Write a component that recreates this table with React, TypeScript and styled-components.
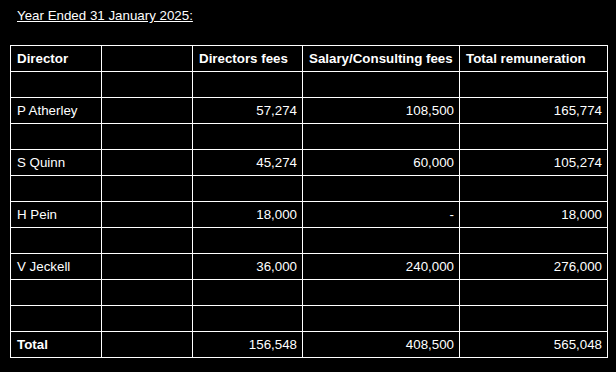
import React from 'react';
import styled, { createGlobalStyle } from 'styled-components';

const GlobalStyle = createGlobalStyle`
  html, body {
    margin: 0;
    padding: 0;
    background: #000;
  }
  body {
    font-family: 'Liberation Sans', Arial, sans-serif;
    color: #fff;
  }
`;

const Page = styled.div`
  width: 616px;
  height: 372px;
  background: #000;
  padding: 8px 0 0 10px;
  box-sizing: border-box;
`;

const Heading = styled.div`
  font-size: 13.333px;
  line-height: 16px;
  padding-left: 7px;
  text-decoration: underline;
  margin-bottom: 21px;
`;

const Table = styled.table`
  border-collapse: collapse;
  table-layout: fixed;
  width: 597px;
`;

const Cell = styled.td<{ $num?: boolean; $head?: boolean }>`
  border: 1px solid #fff;
  height: 26px;
  padding: 0 5px 0 6px;
  box-sizing: border-box;
  font-size: 13.333px;
  font-weight: ${(p) => (p.$head ? 700 : 400)};
  text-align: ${(p) => (p.$num ? 'right' : 'left')};
  white-space: nowrap;
  vertical-align: middle;
`;

type Row = {
  name: string;
  fees: string;
  salary: string;
  total: string;
  bold?: boolean;
};

const rows: (Row | null)[] = [
  null,
  { name: 'P Atherley', fees: '57,274', salary: '108,500', total: '165,774' },
  null,
  { name: 'S Quinn', fees: '45,274', salary: '60,000', total: '105,274' },
  null,
  { name: 'H Pein', fees: '18,000', salary: '-', total: '18,000' },
  null,
  { name: 'V Jeckell', fees: '36,000', salary: '240,000', total: '276,000' },
  null,
  null,
  { name: 'Total', fees: '156,548', salary: '408,500', total: '565,048', bold: true },
];

const App = (): JSX.Element => (
  <Page>
    <GlobalStyle />
    <Heading>Year Ended 31 January 2025:</Heading>
    <Table>
      <colgroup>
        <col style={{ width: 91 }} />
        <col style={{ width: 91 }} />
        <col style={{ width: 110 }} />
        <col style={{ width: 157 }} />
        <col style={{ width: 148 }} />
      </colgroup>
      <tbody>
        <tr>
          <Cell $head>Director</Cell>
          <Cell />
          <Cell $head>Directors fees</Cell>
          <Cell $head>Salary/Consulting fees</Cell>
          <Cell $head>Total remuneration</Cell>
        </tr>
        {rows.map((r, i) =>
          r ? (
            <tr key={i}>
              <Cell $head={r.bold}>{r.name}</Cell>
              <Cell />
              <Cell $num>{r.fees}</Cell>
              <Cell $num>{r.salary}</Cell>
              <Cell $num>{r.total}</Cell>
            </tr>
          ) : (
            <tr key={i}>
              <Cell />
              <Cell />
              <Cell />
              <Cell />
              <Cell />
            </tr>
          )
        )}
      </tbody>
    </Table>
  </Page>
);

export default App;
